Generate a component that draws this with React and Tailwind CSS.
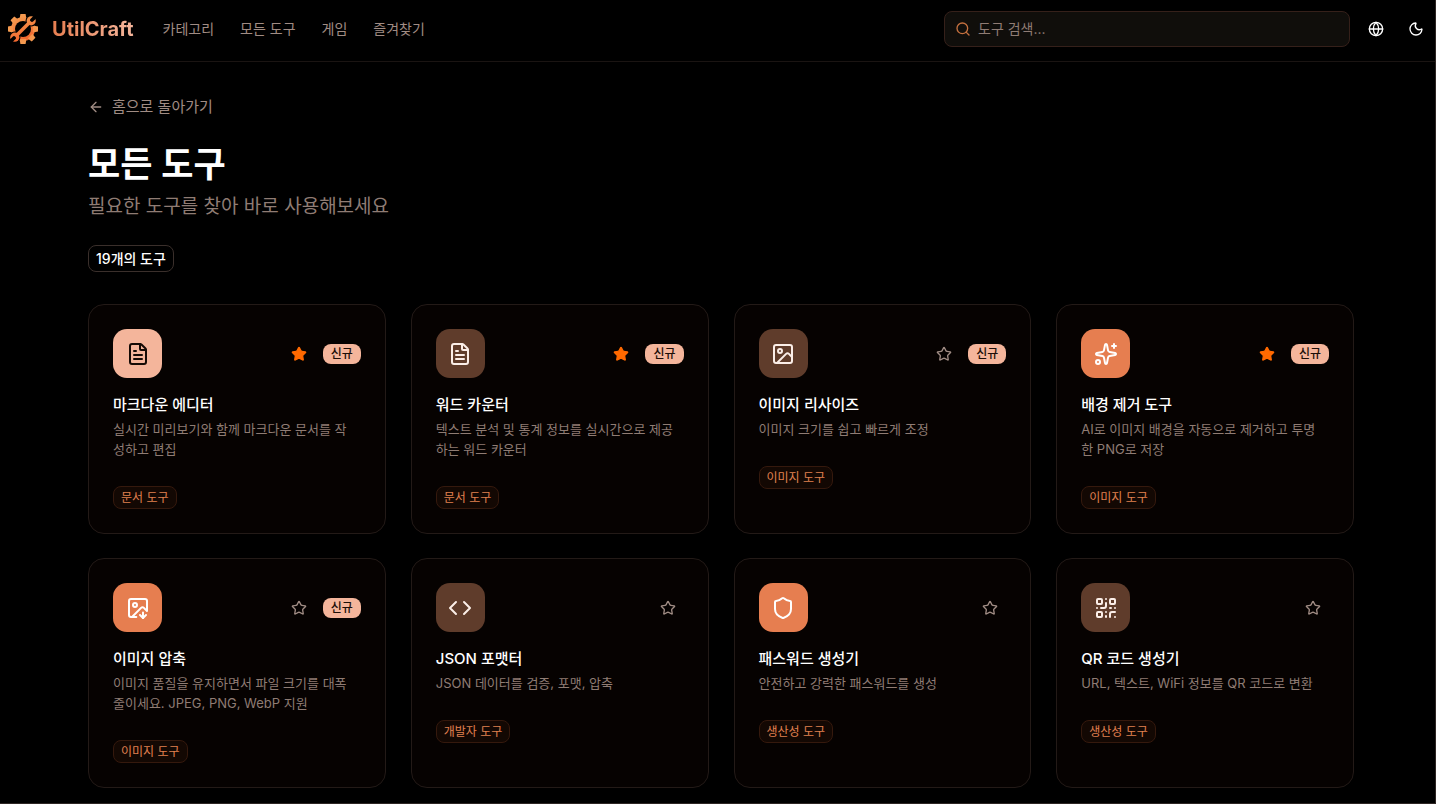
import React, { useState } from 'react';
import {
  ArrowLeft,
  Code,
  FileText,
  Globe,
  Image,
  ImageDown,
  Moon,
  QrCode,
  Search,
  Shield,
  Sparkles,
  Star,
} from 'lucide-react';
import clsx from 'clsx';

const navLinks = ['카테고리', '모든 도구', '게임', '즐겨찾기'];

const tones = {
  peach: 'bg-[#f4b59b] text-[#150a05]',
  brown: 'bg-[#5f3c2b] text-[#fbeee8]',
  orange: 'bg-[#e67e50] text-white',
};

const tools = [
  { name: '마크다운 에디터', description: '실시간 미리보기와 함께 마크다운 문서를 작\n성하고 편집', category: '문서 도구', icon: FileText, tone: 'peach', isNew: true, favorite: true },
  { name: '워드 카운터', description: '텍스트 분석 및 통계 정보를 실시간으로 제공\n하는 워드 카운터', category: '문서 도구', icon: FileText, tone: 'brown', isNew: true, favorite: true },
  { name: '이미지 리사이즈', description: '이미지 크기를 쉽고 빠르게 조정', category: '이미지 도구', icon: Image, tone: 'brown', isNew: true },
  { name: '배경 제거 도구', description: 'AI로 이미지 배경을 자동으로 제거하고 투명\n한 PNG로 저장', category: '이미지 도구', icon: Sparkles, tone: 'orange', isNew: true, favorite: true },
  { name: '이미지 압축', description: '이미지 품질을 유지하면서 파일 크기를 대폭\n줄이세요. JPEG, PNG, WebP 지원', category: '이미지 도구', icon: ImageDown, tone: 'orange', isNew: true },
  { name: 'JSON 포맷터', description: 'JSON 데이터를 검증, 포맷, 압축', category: '개발자 도구', icon: Code, tone: 'brown' },
  { name: '패스워드 생성기', description: '안전하고 강력한 패스워드를 생성', category: '생산성 도구', icon: Shield, tone: 'orange' },
  { name: 'QR 코드 생성기', description: 'URL, 텍스트, WiFi 정보를 QR 코드로 변환', category: '생산성 도구', icon: QrCode, tone: 'brown' },
];

// the two diagonal teeth are left out, the wrench takes their place
const teeth = [0, 90, 135, 180, 270, 315];

function Logo() {
  return (
    <svg viewBox="0 0 32 32" className="size-8" aria-hidden="true">
      <defs>
        <linearGradient id="logo-fill" gradientUnits="userSpaceOnUse" x1="10" y1="0" x2="20" y2="32">
          <stop offset="0" stopColor="#f5a255" />
          <stop offset="1" stopColor="#f25a26" />
        </linearGradient>
        <mask id="gear-cut" maskUnits="userSpaceOnUse" x="0" y="0" width="32" height="32">
          <rect width="32" height="32" fill="white" />
          <circle cx="16" cy="16" r="8" fill="black" />
          <path d="M7 25 25 7" stroke="black" strokeWidth="6" />
          <circle cx="24.4" cy="7.6" r="5.8" fill="black" />
          <circle cx="7.6" cy="24.4" r="5.8" fill="black" />
        </mask>
        <mask id="wrench-cut" maskUnits="userSpaceOnUse" x="0" y="0" width="32" height="32">
          <rect width="32" height="32" fill="white" />
          <path d="M25 7 30 2M7 25 2 30" stroke="black" strokeWidth="3.8" strokeLinecap="round" />
        </mask>
      </defs>
      <g fill="url(#logo-fill)" mask="url(#gear-cut)">
        <circle cx="16" cy="16" r="12" />
        {teeth.map((angle) => (
          <path key={angle} d="M12.6 6 13.4 1h5.2l.8 5z" transform={`rotate(${angle} 16 16)`} />
        ))}
      </g>
      <g mask="url(#wrench-cut)">
        <path d="M8 24 24 8" stroke="url(#logo-fill)" strokeWidth="3.6" />
        <circle cx="24.2" cy="7.8" r="4.6" fill="url(#logo-fill)" />
        <circle cx="7.8" cy="24.2" r="4.6" fill="url(#logo-fill)" />
      </g>
    </svg>
  );
}

function Header() {
  return (
    <header className="flex h-[62px] items-center border-b border-[#1a1412] pr-[11px] pb-1 pl-[7px]">
      <a href="#" className="flex items-center gap-[13px]">
        <Logo />
        <span className="bg-gradient-to-r from-[#e67e50] to-[#f4b59b] bg-clip-text text-xl leading-7 font-bold text-transparent">
          UtilCraft
        </span>
      </a>
      <nav className="ml-[29px] flex items-center gap-[26px] text-sm text-[#a08c84]">
        {navLinks.map((label) => (
          <a key={label} href="#" className="whitespace-nowrap">{label}</a>
        ))}
      </nav>

      <div className="ml-auto flex items-center">
        <label className="flex h-9 w-[406px] items-center gap-[7px] rounded-lg border border-[#35201a] bg-[#100e0b] px-[10px]">
          <Search className="size-4 shrink-0 text-[#c4703f]" />
          <input
            type="search"
            aria-label="도구 검색"
            placeholder="도구 검색..."
            className="w-full bg-transparent text-sm text-white outline-none placeholder:text-[#8f7c74]"
          />
        </label>
        <button type="button" aria-label="언어" className="ml-[18px] text-white">
          <Globe className="size-4" />
        </button>
        <button type="button" aria-label="테마" className="ml-6 text-white">
          <Moon className="size-4" />
        </button>
      </div>
    </header>
  );
}

function ToolCard({ tool }) {
  const [favorite, setFavorite] = useState(Boolean(tool.favorite));
  const Icon = tool.icon;

  return (
    <article className="rounded-2xl border border-[#231a17] bg-[#060201] p-6">
      <div className="flex items-center justify-between">
        <div className={clsx('flex size-[49px] items-center justify-center rounded-[14px]', tones[tool.tone])}>
          <Icon className="size-6" />
        </div>
        <div className="flex items-center">
          <button
            type="button"
            aria-label="즐겨찾기"
            aria-pressed={favorite}
            onClick={() => setFavorite(!favorite)}
            className="flex size-8 items-center justify-center"
          >
            <Star className={clsx('size-4', favorite ? 'fill-[#ff6900] text-[#ff6900]' : 'text-[#a08c84]')} />
          </button>
          {tool.isNew && (
            <span className="ml-2 rounded-lg bg-[#f4b59b] px-2 text-xs leading-5 font-medium text-[#1c0e08]">신규</span>
          )}
        </div>
      </div>
      <h2 className="mt-[17px] text-[15px] leading-5 font-medium text-white">{tool.name}</h2>
      <p className="mt-1 text-[13px] leading-5 whitespace-pre-line text-[#8f7c74]">{tool.description}</p>
      <span className="mt-[27px] inline-flex h-[23px] items-center rounded-lg border border-[#35190d] bg-[#130803] px-[7px] text-xs text-[#e08050]">
        {tool.category}
      </span>
    </article>
  );
}

export default function App() {
  return (
    <div className="flex min-h-screen flex-col border-r border-b border-[#2e2624] bg-black font-['Inter','Noto_Sans_CJK_KR',sans-serif]">
      <Header />

      <main className="flex-1 pt-[33px] pr-[81px] pb-[14px] pl-[88px]">
        <a href="#" className="flex w-fit items-center gap-2 text-[15px] leading-6 text-[#a08c84]">
          <ArrowLeft className="size-4" />
          홈으로 돌아가기
        </a>
        <h1 className="mt-[25px] text-[35px] leading-10 font-semibold text-white">모든 도구</h1>
        <p className="mt-[9px] text-[19px] leading-7 text-[#8f7c74]">필요한 도구를 찾아 바로 사용해보세요</p>
        <span className="mt-6 inline-flex h-[27px] items-center rounded-lg border border-[#3a2f2b] px-[7px] text-sm font-medium text-white">
          19개의 도구
        </span>

        {/* Tool grid */}
        <div className="mt-8 grid grid-cols-4 gap-x-[25px] gap-y-6">
          {tools.map((tool) => (
            <ToolCard key={tool.name} tool={tool} />
          ))}
        </div>
      </main>
    </div>
  );
}
